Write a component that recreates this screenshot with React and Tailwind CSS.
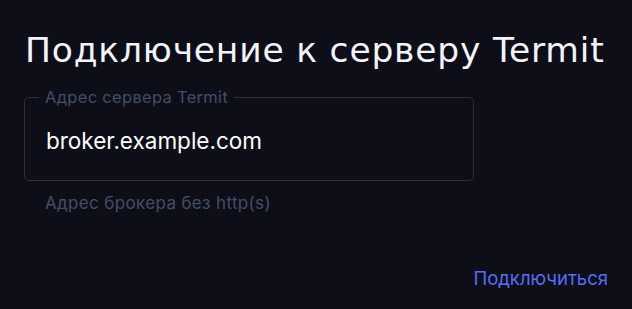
export default function App() {
  return (
    <div className="w-[632px] h-[309px] bg-[#0e0e19] flex flex-col px-6 pt-[28px]" style={{ fontFamily: "Inter, 'Noto Sans', sans-serif" }}>
      <h1 className="text-[34.5px] leading-[44px] text-[#f2f4fa] pl-[1px] tracking-[0.8px]" style={{ fontFamily: "'DejaVu Sans', sans-serif" }}>Подключение к серверу Termit</h1>
      <fieldset className="mt-[16px] w-[450px] h-[93px] border border-[#2c2d3d] rounded-[5px] px-[14px]">
        <legend className="px-[6px] text-[16.5px] leading-[18px] text-[#424e66] tracking-[0.3px]">Адрес сервера Termit</legend>
        <div className="text-[22.5px] leading-[28px] text-white pl-[7px] pt-[21px]">broker.example.com</div>
      </fieldset>
      <div className="text-[17px] leading-[20px] text-[#424e66] pl-[21px] mt-[12px] tracking-[0.35px]">Адрес брокера без http(s)</div>
      <div className="flex justify-end mt-[54px]">
        <button className="text-[18.5px] leading-[22px] text-[#5a6cf5]">Подключиться</button>
      </div>
    </div>
  );
}
